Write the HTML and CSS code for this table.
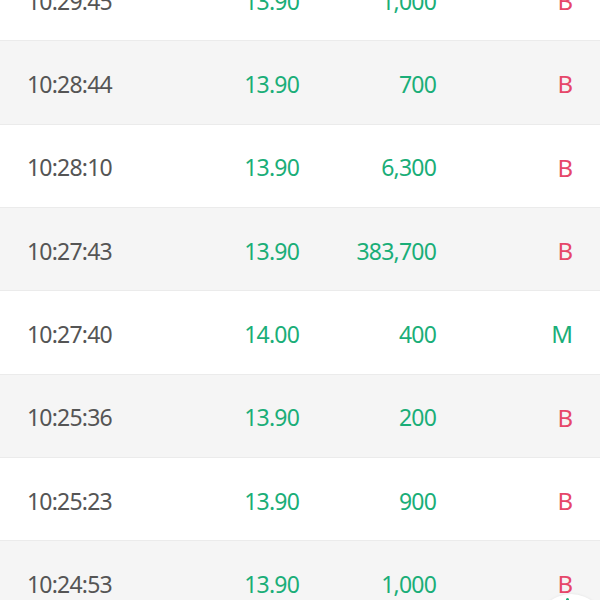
FILE: index.html
```html
<!DOCTYPE html>
<html>
<head>
<meta charset="utf-8">
<link rel="stylesheet" href="styles.css">
</head>
<body>
<div class="list">
  <div class="row"><span class="time">10:29:45</span><span class="price">13.90</span><span class="vol">1,000</span><span class="side buy">B</span></div>
  <div class="row alt"><span class="time">10:28:44</span><span class="price">13.90</span><span class="vol">700</span><span class="side buy">B</span></div>
  <div class="row"><span class="time">10:28:10</span><span class="price">13.90</span><span class="vol">6,300</span><span class="side buy">B</span></div>
  <div class="row alt"><span class="time">10:27:43</span><span class="price">13.90</span><span class="vol">383,700</span><span class="side buy">B</span></div>
  <div class="row"><span class="time">10:27:40</span><span class="price">14.00</span><span class="vol">400</span><span class="side mid">M</span></div>
  <div class="row alt"><span class="time">10:25:36</span><span class="price">13.90</span><span class="vol">200</span><span class="side buy">B</span></div>
  <div class="row"><span class="time">10:25:23</span><span class="price">13.90</span><span class="vol">900</span><span class="side buy">B</span></div>
  <div class="row alt"><span class="time">10:24:53</span><span class="price">13.90</span><span class="vol">1,000</span><span class="side buy">B</span></div>
</div>
<div class="fab"><span class="fab-dot"></span></div>
</body>
</html>
```

FILE: styles.css
```css
html, body {
  margin: 0;
  padding: 0;
  background: #ffffff;
  overflow: hidden;
  height: 600px;
}
body {
  font-family: "Noto Sans", "Open Sans", sans-serif;
  position: relative;
}
.list {
  margin-top: -42px;
}
.row {
  display: grid;
  grid-template-columns: 132px 140px 137px 137px;
  align-items: center;
  box-sizing: border-box;
  height: 83.33px;
  padding-top: 3px;
  border-bottom: 1px solid #ebebeb;
  font-size: 23px;
  font-weight: 400;
  letter-spacing: -0.8px;
  padding-left: 27px;
  background: #ffffff;
}
.row.alt {
  background: #f5f5f5;
}
.time {
  color: #555555;
  text-align: left;
  white-space: nowrap;
}
.price, .vol {
  color: #1aae78;
  text-align: right;
}
.side {
  text-align: right;
  letter-spacing: 0;
  font-size: 24px;
}
.buy {
  color: #e6476a;
}
.mid {
  color: #1aae78;
}
.fab {
  position: absolute;
  left: 536px;
  top: 594px;
  width: 70px;
  height: 70px;
  border-radius: 50%;
  background: #ffffff;
  box-shadow: 0 0 3px rgba(0, 0, 0, 0.08);
}
.fab-dot {
  position: absolute;
  left: 30px;
  top: 4px;
  width: 3px;
  height: 3px;
  background: #1aae78;
  border-radius: 50%;
}
```
